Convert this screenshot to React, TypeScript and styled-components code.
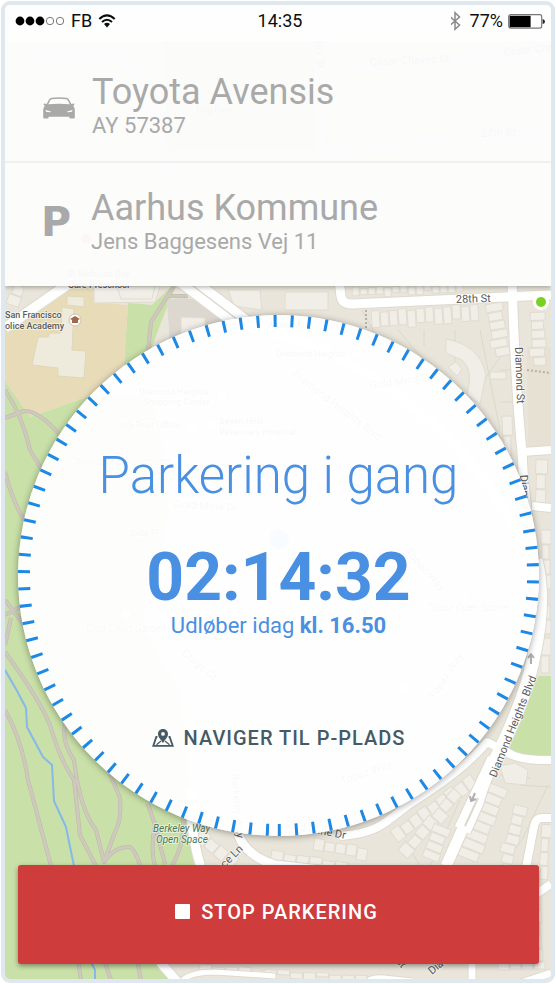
import React from 'react';
import styled, { createGlobalStyle } from 'styled-components';

const GlobalStyle = createGlobalStyle`
  *, *::before, *::after { box-sizing: border-box; }
  body {
    margin: 0;
    background: #ffffff;
    font-family: Roboto, "Liberation Sans", sans-serif;
  }
`;

const Page = styled.div`
  display: flex;
  min-height: 100vh;
  padding: 1px;
`;

const Phone = styled.div`
  position: relative;
  isolation: isolate;
  flex: 1;
  display: flex;
  flex-direction: column;
  overflow: hidden;
  border: 4px solid #e0e8ef;
  border-radius: 9px;
  background: #e9e5da;
`;

const MapCanvas = styled.svg`
  position: absolute;
  inset: 0;
  z-index: -1;
  width: 100%;
  height: 100%;
`;

const Header = styled.header`
  background: rgba(252, 252, 252, 0.97);
  box-shadow: 0 1px 5px rgba(0, 0, 0, 0.35);
  color: #a9a9a9;
`;

const StatusBar = styled.div`
  display: grid;
  grid-template-columns: 1fr auto 1fr;
  align-items: center;
  height: 36px;
  padding: 0 6px 4px 10px;
  background: rgba(255, 255, 255, 0.7);
  color: #0b0f10;
  font-size: 18px;
  line-height: 24px;
`;

const StatusGroup = styled.div<{ $end?: boolean }>`
  display: flex;
  align-items: center;
  justify-content: ${(p) => (p.$end ? 'flex-end' : 'flex-start')};
  gap: ${(p) => (p.$end ? 5 : 6)}px;
`;

const InfoRow = styled.section<{ $first?: boolean }>`
  display: grid;
  grid-template-columns: 50px 1fr;
  align-items: center;
  padding: ${(p) => (p.$first ? '31px 16px 21px 37px' : '25px 16px 30px 36px')};
  border-bottom: ${(p) => (p.$first ? '2px solid #f0f0f0' : '0')};
`;

const RowTitle = styled.h2`
  margin: 0;
  font-size: 36px;
  font-weight: 400;
  line-height: 40px;
`;

const RowText = styled.p`
  margin: 0;
  font-size: 22px;
  line-height: 28px;
`;

const ParkingSign = styled.span`
  font-family: "DejaVu Sans", sans-serif;
  font-size: 41px;
  font-weight: 700;
  line-height: 48px;
`;

const Main = styled.main`
  flex: 1;
  display: flex;
  flex-direction: column;
  justify-content: space-between;
  gap: 28px;
  padding: 29px 12px 15px 13px;
`;

const Dial = styled.section`
  position: relative;
  display: flex;
  flex-direction: column;
  align-items: center;
  aspect-ratio: 1;
  padding-top: 131px;
  border-radius: 50%;
  background: rgba(255, 255, 255, 0.96);
  box-shadow: 0 1px 7px rgba(0, 0, 0, 0.38);
  color: #4990e2;
`;

const Ticks = styled.svg`
  position: absolute;
  inset: 0;
  width: 100%;
  height: 100%;
  pointer-events: none;
`;

const Title = styled.h1`
  margin: 0 0 37px;
  font-size: 51px;
  font-weight: 300;
  line-height: 60px;
`;

const Timer = styled.time`
  font-size: 66px;
  font-weight: 700;
  line-height: 70px;
`;

const Expiry = styled.p`
  margin: 0 0 87px;
  font-size: 22px;
  line-height: 26px;
`;

const NavigateButton = styled.button`
  display: flex;
  align-items: center;
  gap: 10px;
  padding: 0;
  border: 0;
  background: none;
  color: #455a64;
  font: 500 20px/24px Roboto, sans-serif;
  letter-spacing: 1px;
  cursor: pointer;
`;

const StopButton = styled.button`
  display: flex;
  align-items: center;
  justify-content: center;
  gap: 11px;
  height: 99px;
  padding: 0 4px 6px 0;
  border: 0;
  border-radius: 3px;
  background: #cf3c3c;
  box-shadow: 0 2px 5px rgba(0, 0, 0, 0.4);
  color: #ffffff;
  font: 500 20px/24px Roboto, sans-serif;
  letter-spacing: 1px;
  cursor: pointer;
`;

const StopSquare = styled.span`
  width: 15px;
  height: 15px;
  border-radius: 1px;
  background: #ffffff;
`;

type HousesProps = {
  x: number;
  y: number;
  angle: number;
  count: number;
  w: number;
  h: number;
};

function Houses({ x, y, angle, count, w, h }: HousesProps) {
  return (
    <g transform={`translate(${x} ${y}) rotate(${angle})`}>
      {Array.from({ length: count }, (_, i) => (
        <rect
          key={i}
          x={i * w}
          y={(i * 5) % 3}
          width={w - 1}
          height={h - ((i * 7) % 4)}
        />
      ))}
    </g>
  );
}

const houseRows: HousesProps[] = [
  { x: 352, y: 287, angle: -2, count: 14, w: 8, h: 9 },
  { x: 371, y: 311, angle: -4, count: 12, w: 9, h: 17 },
  { x: 502, y: 302, angle: 80, count: 6, w: 9, h: 17 },
  { x: 545, y: 312, angle: 88, count: 6, w: 9, h: 15 },
  { x: 512, y: 416, angle: 88, count: 2, w: 20, h: 10 },
  { x: 548, y: 460, angle: 92, count: 3, w: 15, h: 12 },
  { x: 551, y: 530, angle: 90, count: 7, w: 15, h: 10 },
  { x: 551, y: 638, angle: 90, count: 2, w: 18, h: 11 },
  { x: 6, y: 303, angle: -70, count: 2, w: 11, h: 13 },
  { x: 390, y: 831, angle: -36, count: 9, w: 11, h: 14 },
  { x: 398, y: 850, angle: -48, count: 7, w: 12, h: 13 },
  { x: 315, y: 838, angle: 10, count: 5, w: 11, h: 12 },
  { x: 272, y: 850, angle: 9, count: 6, w: 13, h: 10 },
  { x: 203, y: 829, angle: 40, count: 4, w: 12, h: 14 },
  { x: 218, y: 826, angle: -70, count: 1, w: 14, h: 16 },
  { x: 508, y: 790, angle: 112, count: 8, w: 10, h: 24 },
  { x: 451, y: 830, angle: 112, count: 4, w: 9, h: 18 },
  { x: 528, y: 808, angle: 105, count: 6, w: 10, h: 14 },
  { x: 552, y: 825, angle: 95, count: 4, w: 14, h: 10 },
  { x: 200, y: 964, angle: 4, count: 15, w: 13, h: 7 },
  { x: 498, y: 962, angle: 0, count: 4, w: 12, h: 8 },
  { x: 541, y: 868, angle: 98, count: 3, w: 12, h: 7 },
  { x: 541, y: 910, angle: 88, count: 4, w: 13, h: 10 },
];

const roads: Array<[string, number]> = [
  ['M74 280 L5 328', 10],
  ['M178 281 L236 325 Q340 340 440 430 Q520 510 537 590', 9],
  ['M195 281 L252 324', 9],
  ['M339 280 L341 296 Q342 304 352 304 L505 297 L551 295', 9],
  ['M512 280 Q515 380 522 452 Q524 500 534 560', 9],
  ['M522 452 L551 450', 8],
  ['M532 506 L551 508', 8],
  ['M536 560 Q546 600 534 655 Q526 700 493 764', 13],
  ['M496 758 Q482 790 479 803 L466 832', 9],
  ['M492 758 L459 828', 9],
  ['M463 828 L446 866', 11],
  ['M512 755 L487 742 Q464 770 411 803 L386 822 Q370 834 340 836', 8],
  ['M505 751 Q518 761 551 760', 8],
  ['M551 818 L542 818 Q536 818 534 826 L526 868', 8],
  ['M551 884 L530 898', 8],
  ['M192 790 Q188 825 201 868', 9],
  ['M238 834 Q246 856 275 865 L320 870', 9],
  ['M160 962 L180 985', 9],
  ['M182 981 Q190 972 215 972 L275 976', 5],
  ['M368 982 Q370 977 384 978 L412 981', 5],
  ['M472 960 L472 982', 7],
  ['M551 973 L515 985', 7],
  ['M20 60 Q70 50 130 60 Q160 90 165 180', 9],
  ['M330 68 L551 52', 9],
  ['M318 8 L322 150 L551 133', 9],
];

const paths = [
  'M174 286 L151 322 L148 352',
  'M168 296 L188 296',
  'M5 390 Q22 415 30 450 L42 470',
  'M5 418 L24 411 Q38 410 60 435',
  'M5 472 Q12 500 24 520',
  'M5 615 L24 605 M5 600 L24 625 M11 618 L5 645',
  'M5 652 Q40 700 50 725 Q60 760 74 780 L80 835 L98 870 M66 720 Q60 740 74 760 Q80 810 96 830 L104 862',
  'M5 710 Q22 740 28 780 L51 866',
  'M110 774 L120 798 Q122 820 115 832 L104 862 Q115 846 130 847 Q135 850 140 865',
  'M148 804 L155 825 Q150 850 155 866 M155 825 L165 864 M183 815 Q186 840 172 866',
  'M78 960 L81 980 M104 960 L111 980 M137 960 L141 980',
];

type MapLabel = { t: string; x: number; y: number; r?: number; s?: number; c?: string; i?: boolean };

const labels: MapLabel[] = [
  { t: 'St Nicholas Day', x: 67, y: 277 },
  { t: 'Care Preschool', x: 68, y: 288 },
  { t: 'San Francisco', x: 5, y: 318 },
  { t: 'olice Academy', x: 5, y: 329 },
  { t: '28th St', x: 456, y: 303, r: -2, s: 11 },
  { t: 'Diamond St', x: 515, y: 347, r: 88, s: 11 },
  { t: 'Diamond St', x: 520, y: 475, r: 86, s: 11 },
  { t: 'Diamond Heights Blvd', x: 496, y: 778, r: -68, s: 11 },
  { t: 'Berkeley Way', x: 153, y: 832, c: '#4c7a56', i: true },
  { t: 'Open Space', x: 156, y: 843, c: '#4c7a56', i: true },
  { t: 'Quince Ln', x: 209, y: 884, r: -45, s: 11 },
  { t: 'Gold Mine Dr', x: 283, y: 827, r: 11, s: 11 },
  { t: 'Diamond St', x: 363, y: 927, r: 47, s: 11 },
  { t: 'Diamond Heights', x: 432, y: 975, r: -40, s: 11 },
  { t: 'Diamond Heights', x: 139, y: 395 },
  { t: 'Shopping Center', x: 143, y: 405 },
  { t: 'US Post Office', x: 122, y: 428 },
  { t: 'Seven Hills', x: 219, y: 424 },
  { t: 'Veterinary Hospital', x: 219, y: 435 },
  { t: 'Alpion At', x: 268, y: 328 },
  { t: 'Diamond Heights', x: 276, y: 357 },
  { t: 'Christopher Playground', x: 69, y: 465, i: true },
  { t: 'Gold Mine Dr', x: 370, y: 389, r: -8, s: 11 },
  { t: 'Diamond Heights Blvd', x: 292, y: 376, r: 37, s: 11 },
  { t: 'Gold Mine Dr', x: 174, y: 508, r: 3, s: 11 },
  { t: 'Jade Pl', x: 129, y: 536 },
  { t: 'Crag Court Garden', x: 86, y: 632, i: true },
  { t: 'Crags Ct', x: 181, y: 654, r: 40, s: 11 },
  { t: 'Topaz Way', x: 405, y: 552, r: 48, s: 11 },
  { t: 'Topaz Open Space', x: 427, y: 611, i: true },
  { t: 'Topaz Way', x: 434, y: 700, r: -56, s: 11 },
  { t: 'Topaz Way', x: 342, y: 785, r: -20, s: 11 },
  { t: 'Berkeley Way', x: 231, y: 774, r: 85, s: 11 },
  { t: 'Cesar Chavez St', x: 370, y: 66, r: -3, s: 11 },
  { t: 'Cesar Cha', x: 504, y: 56, r: -6, s: 11 },
  { t: 'Douglass St', x: 315, y: 10, r: 88, s: 11 },
  { t: '27th St', x: 481, y: 137, r: -2, s: 11 },
  { t: 'Dog Park', x: 196, y: 113 },
];

function StreetMap() {
  return (
    <MapCanvas viewBox="5 5 546 974" preserveAspectRatio="xMidYMid slice" aria-hidden="true">
      <rect x="5" y="5" width="546" height="974" fill="#e9e5da" />
      <path d="M165 40 H315 V150 H165 Z" fill="#d5e6bd" />
      <path
        d="M5 381 L30 417 L90 396 L150 395 Q180 480 160 560 Q120 610 180 690 L190 800 L200 870 L158 962 L170 979 H5 Z"
        fill="#c9e0a8"
      />
      <path d="M172 286 L176 286 L165 312 L150 352 L124 366 L128 303 L152 305 Z" fill="#c9e0a8" />
      <path d="M167 300 Q200 292 226 320 L170 345 Z" fill="#dcd8cf" />
      <path d="M68 286 H96 L94 302 L128 305 L124 364 L90 396 L30 417 L5 381 V329 Z" fill="#e8dcb8" />
      <path
        d="M38 337 H48 L50 333 H61 L62 307 L74 309 L72 350 L86 351 L84 378 L58 376 V368 L32 365 Z M67 296 L84 297 V307 L67 305 Z"
        fill="#efebdc"
        stroke="#ded7bd"
      />
      <path d="M538 676 H551 V756 Q525 760 508 748 Z" fill="#c9e0a8" />
      <path d="M527 346 L551 347 V447 L528 449 Z" fill="#e6e1d3" />
      <g fill="none" stroke="#ddd8c9">
        <path d="M362 310 L400 380 L500 450 M398 330 L500 450 M480 330 L500 430 M505 350 L470 400 L503 440" />
        <path d="M455 330 V362 M424 330 V346 M500 370 H512 M500 402 H512 M548 785 L522 840 L502 866" />
        <path d="M460 800 L430 866 M405 840 L420 866 M520 785 L551 787 M500 775 L530 778" />
      </g>
      <g fill="#f0eee7" stroke="#e0dcd1">
        <path d="M94 286 H160 L155 302 L94 303 Z M228 290 H260 L262 310 L234 306 Z M285 292 H328 V310 H285 Z" />
        <path d="M446 339 Q480 345 486 375 L480 404 L467 394 Q474 370 462 360 L446 353 Z" />
        <path d="M448 367 L456 362 L462 369 L457 376 Z M490 372 H506 V379 H490 Z M500 766 L515 763 L528 770 L526 785 L505 783 Z" />
        <path d="M117 286 H155 L152 299 H121 Z M181 317 L205 318 V338 L181 341 Z" />
        {houseRows.map((row, i) => (
          <Houses key={i} {...row} />
        ))}
      </g>
      <g fill="none" strokeLinejoin="round">
        {paths.map((d) => (
          <path key={d} d={d} stroke="#bdb9aa" strokeWidth="4" />
        ))}
        {paths.map((d) => (
          <path key={d} d={d} stroke="#cec9bc" strokeWidth="3" />
        ))}
        <path
          d="M5 670 Q17 690 26 708 L27 727 L43 757 L52 765 L54 801 L66 827 L74 866 M90 960 L95 970 V980"
          stroke="#86b8ea"
          strokeWidth="2"
        />
        {roads.map(([d, w]) => (
          <path key={d} d={d} stroke="#dedacf" strokeWidth={w + 2} />
        ))}
        {roads.map(([d, w]) => (
          <path key={d} d={d} stroke="#ffffff" strokeWidth={w} />
        ))}
        <path d="M465 826 L478 798" stroke="#dcd8cc" strokeWidth="2" />
        <path d="M366 310 V330 M527 370 L551 373" stroke="#b7b2a2" strokeWidth="2" strokeDasharray="2 2" />
        <path d="M531 664 V654 M528 658 L531 654 L534 658 M472 800 L475 793 M470 796 L471 801 L476 799" stroke="#b0b0b0" strokeWidth="2" />
      </g>
      <g fontFamily="Roboto, sans-serif" stroke="#ffffff" strokeOpacity="0.5" strokeWidth="2" paintOrder="stroke">
        {labels.map((l, i) => (
          <text
            key={i}
            transform={`translate(${l.x} ${l.y}) rotate(${l.r ?? 0})`}
            fontSize={l.s ?? (l.i ? 10 : 9)}
            fontWeight={l.s || l.i ? 400 : 500}
            fontStyle={l.i ? 'italic' : 'normal'}
            fill={l.c ?? '#5c5c5c'}
          >
            {l.t}
          </text>
        ))}
      </g>
      <circle cx="75" cy="320" r="6" fill="#ffffff" stroke="#c9c2ae" />
      <path d="M70 319 L75 316 L80 319 L78 320 V323 H72 V320 Z" fill="#a26a4b" />
      <circle cx="279" cy="539" r="10" fill="#4b9bea" />
      <g fill="#ffffff" stroke="#bbbbbb">
        <circle cx="222" cy="397" r="6" />
        <circle cx="192" cy="425" r="6" />
        <circle cx="212" cy="425" r="5" />
        <circle cx="315" cy="329" r="5" />
        <circle cx="356" cy="353" r="5" />
        <circle cx="126" cy="615" r="5" />
        <circle cx="465" cy="593" r="5" />
        <circle cx="404" cy="688" r="5" />
      </g>
      <circle cx="86" cy="239" r="5" fill="#f05a40" />
      <circle cx="541" cy="302" r="8" fill="#ffffff" />
      <circle cx="541" cy="302" r="5" fill="#79d122" />
    </MapCanvas>
  );
}

function SignalIcon() {
  return (
    <svg width="50" height="12" viewBox="0 0 50 12" role="img" aria-label="Signal">
      {[5, 15, 25].map((x) => (
        <circle key={x} cx={x} cy="6" r="4.4" fill="#000000" />
      ))}
      {[35, 45].map((x) => (
        <circle key={x} cx={x} cy="6" r="3.7" fill="none" stroke="#777777" />
      ))}
    </svg>
  );
}

function WifiIcon() {
  return (
    <svg width="18" height="14" viewBox="0 0 18 14" role="img" aria-label="Wi-Fi">
      <g fill="none" stroke="#0b0f10" strokeWidth="2">
        <path d="M1.3 5 Q9 -2.2 16.7 5" />
        <path d="M4 8 Q9 3.4 14 8" />
      </g>
      <path d="M6 10 Q9 7.6 12 10 L9 13.4 Z" fill="#0b0f10" />
    </svg>
  );
}

function BluetoothIcon() {
  return (
    <svg width="14" height="20" viewBox="2 0 14 20" role="img" aria-label="Bluetooth">
      <path d="M1 5.5 L10.5 14 L6 18.3 V1.7 L10.5 6 L1 14.5" fill="none" stroke="#8a8a8a" strokeWidth="1.5" overflow="visible" />
    </svg>
  );
}

function BatteryIcon() {
  return (
    <svg width="37" height="15" viewBox="0 0 37 15" role="img" aria-label="Battery">
      <rect x="0.7" y="0.7" width="33" height="13.4" rx="2" fill="#ffffff" stroke="#777777" strokeWidth="1.2" />
      <rect x="1.6" y="1.8" width="21" height="11.4" fill="#000000" />
      <path d="M34.6 5 Q37 5.5 37 7.5 Q37 9.5 34.6 10 Z" fill="#222222" />
    </svg>
  );
}

function CarIcon() {
  return (
    <svg width="34" height="26" viewBox="0 -4 34 26" aria-hidden="true">
      <path
        fill="#a9a9a9"
        fillRule="evenodd"
        d="M9.5 0.8 Q17 -0.4 24.5 0.8 Q26.4 1.2 27.4 3.2 L29.4 7 L31.8 6.4 Q33.2 6.8 32.2 8 L31.2 8.8 Q32.8 10.6 32.8 13 V20.6 Q32.8 21.6 31.8 21.6 H28.4 Q27.4 21.6 27.4 20.6 V19.8 H6.6 V20.6 Q6.6 21.6 5.6 21.6 H2.2 Q1.2 21.6 1.2 20.6 V13 Q1.2 10.6 2.8 8.8 L1.8 8 Q0.8 6.8 2.2 6.4 L4.6 7 L6.6 3.2 Q7.6 1.2 9.5 0.8 Z M9.8 2.2 Q8.6 2.5 8 3.8 L6.3 7.3 Q17 6.1 27.7 7.3 L26 3.8 Q25.4 2.5 24.2 2.2 Q17 1.2 9.8 2.2 Z M3.4 13 Q3.6 14.8 5 15 L8.6 15.2 Q9 14.8 8.4 14.2 Z M30.6 13 L25.6 14.2 Q25 14.8 25.4 15.2 L29 15 Q30.4 14.8 30.6 13 Z"
      />
    </svg>
  );
}

function MapPinIcon() {
  return (
    <svg width="22" height="18" viewBox="0 0 22 18" aria-hidden="true">
      <path
        d="M5.4 8 H4.3 L1.3 16.9 H20.7 L17.7 8 H16.6"
        fill="none"
        stroke="#455a64"
        strokeWidth="1.8"
      />
      <path
        fill="#455a64"
        fillRule="evenodd"
        d="M11 0 C14 0 16 2.2 16 4.9 C16 8 13.4 9.8 11 14 C8.6 9.8 6 8 6 4.9 C6 2.2 8 0 11 0 Z M11 3 A1.9 1.9 0 1 0 11 6.8 A1.9 1.9 0 1 0 11 3 Z"
      />
      <path d="M4.5 15.8 L9 12 M17.5 15.8 L13 12" stroke="#455a64" strokeWidth="1.2" />
    </svg>
  );
}

export default function App() {
  return (
    <Page>
      <GlobalStyle />
      <Phone>
        <StreetMap />
        <Header>
          <StatusBar>
            <StatusGroup>
              <SignalIcon />
              <span>FB</span>
              <WifiIcon />
            </StatusGroup>
            <time>14:35</time>
            <StatusGroup $end>
              <BluetoothIcon />
              <span>77%</span>
              <BatteryIcon />
            </StatusGroup>
          </StatusBar>
          <InfoRow $first>
            <CarIcon />
            <div>
              <RowTitle>Toyota Avensis</RowTitle>
              <RowText>AY 57387</RowText>
            </div>
          </InfoRow>
          <InfoRow>
            <ParkingSign aria-hidden="true">P</ParkingSign>
            <div>
              <RowTitle>Aarhus Kommune</RowTitle>
              <RowText>Jens Baggesens Vej 11</RowText>
            </div>
          </InfoRow>
        </Header>
        <Main>
          <Dial>
            <Ticks viewBox="0 0 522 522" aria-hidden="true">
              <circle
                cx="261"
                cy="261"
                r="255"
                fill="none"
                stroke="#1e88e5"
                strokeWidth="12"
                pathLength={360}
                strokeDasharray="0.68 3.162"
                transform="rotate(92.15 261 261)"
              />
            </Ticks>
            <Title>Parkering i gang</Title>
            <Timer>02:14:32</Timer>
            <Expiry>
              Udløber idag <strong>kl. 16.50</strong>
            </Expiry>
            <NavigateButton type="button">
              <MapPinIcon />
              NAVIGER TIL P-PLADS
            </NavigateButton>
          </Dial>
          <StopButton type="button">
            <StopSquare />
            STOP PARKERING
          </StopButton>
        </Main>
      </Phone>
    </Page>
  );
}
